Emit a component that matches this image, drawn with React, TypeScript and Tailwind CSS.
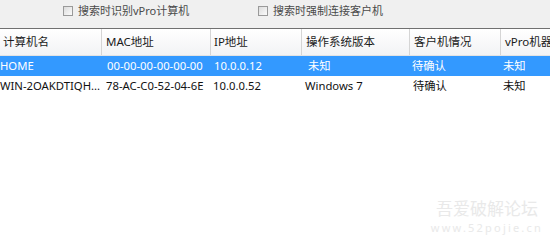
import React from "react";

const cols = [
  { label: "计算机名", w: 102, hp: 3 },
  { label: "MAC地址", w: 109, hp: 4 },
  { label: "IP地址", w: 91, hp: 3 },
  { label: "操作系统版本", w: 108, hp: 4 },
  { label: "客户机情况", w: 91, hp: 4 },
  { label: "vPro机器", w: 60, hp: 4 },
];

const rows = [
  { cells: ["HOME", "00-00-00-00-00-00", "10.0.0.12", "未知", "待确认", "未知"], pads: [0, 5, 3, 6, 2, 2] },
  { cells: ["WIN-2OAKDTIQH...", "78-AC-C0-52-04-6E", "10.0.0.52", "Windows 7", "待确认", "未知"], pads: [0, 4, 2, 3, 3, 2] },
];

const font = { fontFamily: '"Noto Sans", "Noto Sans CJK SC", sans-serif' };

function Check({ label }: { label: string }) {
  return (
    <div className="flex items-center gap-[5px] h-[12px]">
      <div className="w-[10px] h-[10px] border border-[#9a9a9a] bg-gradient-to-br from-[#dcdcdc] to-[#fbfbfb]" />
      <span className="text-[11px] text-[#4a4a4a] leading-[12px]">{label}</span>
    </div>
  );
}

export default function App() {
  return (
    <div className="w-[550px] h-[243px] bg-white overflow-hidden relative" style={font}>
      <div className="h-[28px] bg-[#f0f0f0] flex items-start pt-[5px]">
        <div className="pl-[63px] w-[258px]">
          <Check label="搜索时识别vPro计算机" />
        </div>
        <Check label="搜索时强制连接客户机" />
      </div>
      <div className="border-t border-[#707070]">
        <div className="flex h-[27px] bg-gradient-to-b from-[#ffffff] to-[#f2f3f5] border-b border-[#e3e3e3]">
          {cols.map((c, i) => (
            <div
              key={i}
              className={`shrink-0 flex items-center text-[11.5px] text-[#1a1a1a] whitespace-nowrap ${i < cols.length - 1 ? "border-r border-[#d5d5d5]" : ""}`}
              style={{ width: c.w, paddingLeft: c.hp }}
            >
              {c.label}
            </div>
          ))}
        </div>
        {rows.map((r, ri) => (
          <div
            key={ri}
            className={`flex h-[20px] items-center text-[11.3px] whitespace-nowrap ${ri === 0 ? "bg-[#3399ff] text-white" : "bg-white text-[#111]"}`}
          >
            {r.cells.map((v, i) => (
              <div
                key={i}
                className="shrink-0 leading-[16px]"
                style={{ width: cols[i].w, paddingLeft: r.pads[i] }}
              >
                {v}
              </div>
            ))}
          </div>
        ))}
      </div>
      <div className="absolute right-[7px] bottom-[10px] flex flex-col items-center text-[#e9e9e9] leading-none">
        <span className="text-[17px]">吾爱破解论坛</span>
        <span className="text-[11px] mt-[5px] tracking-[2.2px]">www.52pojie.cn</span>
      </div>
    </div>
  );
}
